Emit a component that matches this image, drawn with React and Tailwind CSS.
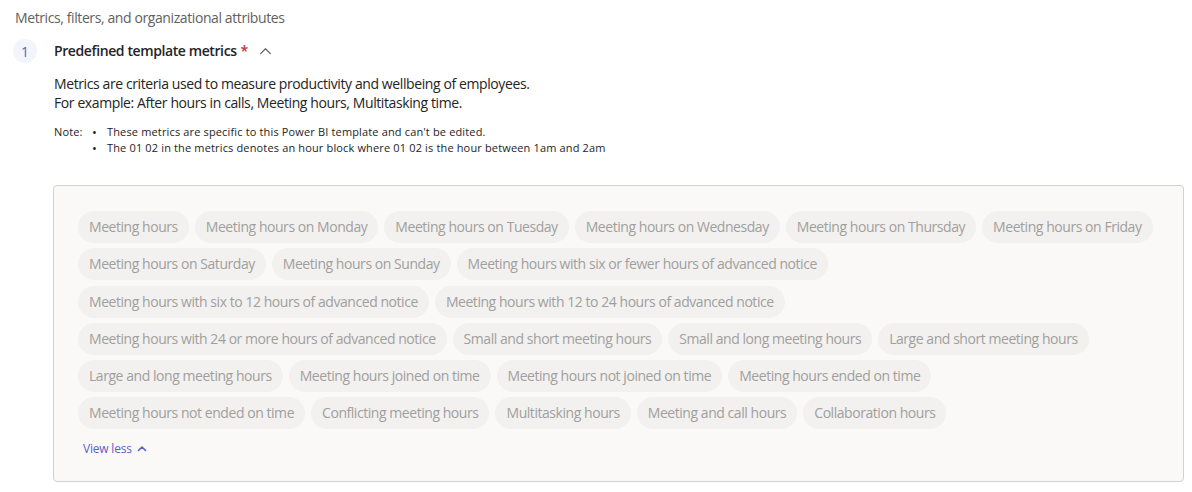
import React from "react";

const rows = [
  ["Meeting hours", "Meeting hours on Monday", "Meeting hours on Tuesday", "Meeting hours on Wednesday", "Meeting hours on Thursday", "Meeting hours on Friday"],
  ["Meeting hours on Saturday", "Meeting hours on Sunday", "Meeting hours with six or fewer hours of advanced notice"],
  ["Meeting hours with six to 12 hours of advanced notice", "Meeting hours with 12 to 24 hours of advanced notice"],
  ["Meeting hours with 24 or more hours of advanced notice", "Small and short meeting hours", "Small and long meeting hours", "Large and short meeting hours"],
  ["Large and long meeting hours", "Meeting hours joined on time", "Meeting hours not joined on time", "Meeting hours ended on time"],
  ["Meeting hours not ended on time", "Conflicting meeting hours", "Multitasking hours", "Meeting and call hours", "Collaboration hours"],
];

function ChevronUp({ className }) {
  return (
    <svg viewBox="0 0 12 12" className={className} fill="none" stroke="currentColor">
      <path d="M1.5 8 L6 3.5 L10.5 8" strokeWidth="1.1" strokeLinecap="round" strokeLinejoin="round" />
    </svg>
  );
}

export default function App() {
  return (
    <div className="w-[1192px] h-[492px] bg-white text-[#242424]" style={{ fontFamily: '"Open Sans", "Noto Sans", sans-serif' }}>
      <div className="pt-[8px] pl-[15px] text-[14px] leading-[20px] tracking-[-0.4px] text-[#616161]">
        Metrics, filters, and organizational attributes
      </div>
      <div className="mt-[11px] flex items-center h-[24px]">
        <div className="ml-[13px] w-[24px] h-[24px] rounded-full bg-[#f3f5fd] flex items-center justify-center text-[14px] text-[#5b5fc7]">
          1
        </div>
        <div className="ml-[17px] text-[14px] font-semibold leading-[20px] tracking-[-0.4px] text-[#242424]">
          Predefined template metrics
          <span className="text-[#c4314b] ml-[4px]">*</span>
        </div>
        <ChevronUp className="ml-[11px] w-[13px] h-[13px] text-[#616161]" />
      </div>
      <div className="ml-[54px] mt-[11px] text-[14px] leading-[19px] tracking-[-0.4px] text-[#242424]">
        <div>Metrics are criteria used to measure productivity and wellbeing of employees.</div>
        <div>For example: After hours in calls, Meeting hours, Multitasking time.</div>
      </div>
      <div className="ml-[54px] mt-[12px] flex text-[11px] leading-[16px] tracking-[0.15px] text-[#242424]">
        <div className="w-[36px]">Note:</div>
        <ul className="flex flex-col">
          <li className="flex">
            <span className="w-[17px] pl-[2px] text-[13px]">•</span>
            <span>These metrics are specific to this Power BI template and can't be edited.</span>
          </li>
          <li className="flex">
            <span className="w-[17px] pl-[2px] text-[13px]">•</span>
            <span>The 01 02 in the metrics denotes an hour block where 01 02 is the hour between 1am and 2am</span>
          </li>
        </ul>
      </div>
      <div className="ml-[53px] mt-[29px] w-[1131px] h-[297px] border border-[#d1d1d1] rounded-[4px] bg-[#faf9f8] pt-[25px] pl-[24px] flex flex-col">
        <div className="flex flex-col gap-[5.25px]">
          {rows.map((row, i) => (
            <div key={i} className="flex gap-[6px]">
              {row.map((t) => (
                <span key={t} className="h-[32px] px-[11px] rounded-full bg-[#f2f1f0] text-[#a19f9d] text-[14px] leading-[32px] tracking-[-0.45px] whitespace-nowrap">
                  {t}
                </span>
              ))}
            </div>
          ))}
        </div>
        <div className="mt-[12px] ml-[5px] flex items-center gap-[4px] text-[12px] leading-[16px] tracking-[-0.2px] text-[#5b5fc7]">
          View less
          <svg viewBox="0 0 12 12" className="w-[12px] h-[12px]" fill="none" stroke="currentColor">
            <path d="M2.5 7.5 L6 4 L9.5 7.5" strokeWidth="1.6" strokeLinecap="round" strokeLinejoin="round" />
          </svg>
        </div>
      </div>
    </div>
  );
}
